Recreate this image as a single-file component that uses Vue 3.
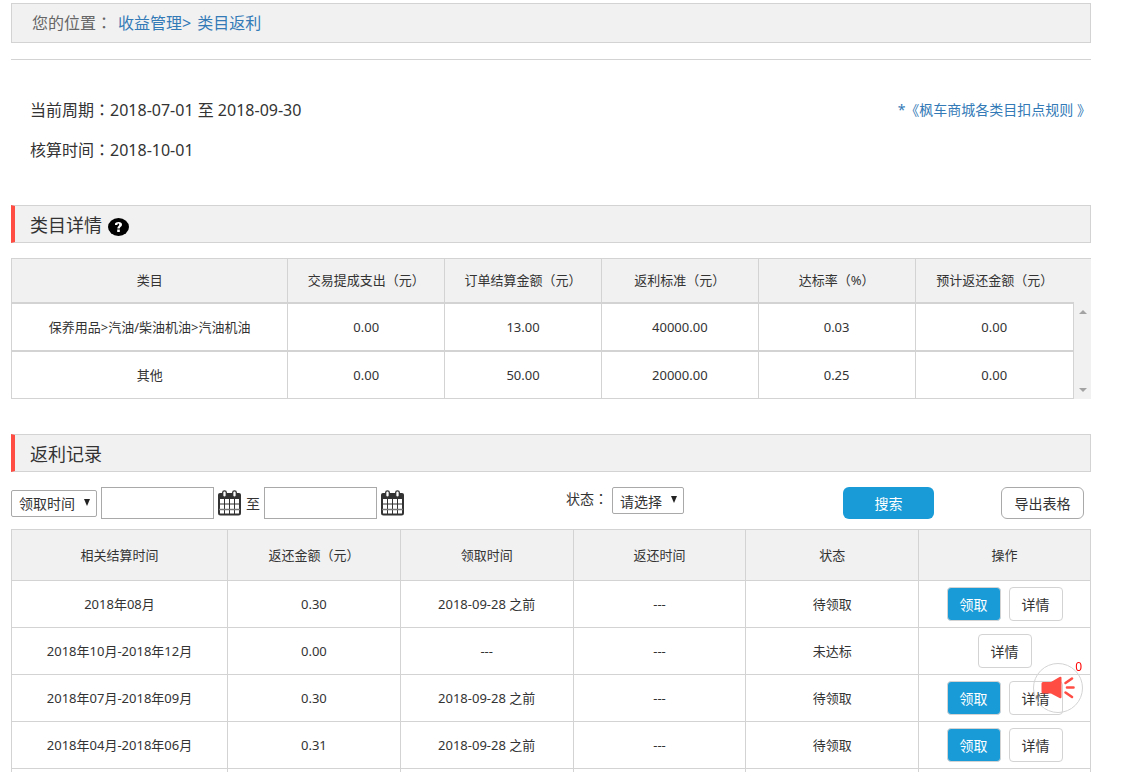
<script setup>
import { ref } from 'vue'

const timeType = ref('领取时间')
const status = ref('请选择')
const startDate = ref('')
const endDate = ref('')

const categories = [
  { name: '保养用品>汽油/柴油机油>汽油机油', paid: '0.00', settled: '13.00', target: '40000.00', rate: '0.03', expected: '0.00' },
  { name: '其他', paid: '0.00', settled: '50.00', target: '20000.00', rate: '0.25', expected: '0.00' }
]

const records = [
  { period: '2018年08月', amount: '0.30', claim: '2018-09-28 之前', returned: '---', status: '待领取', claimable: true },
  { period: '2018年10月-2018年12月', amount: '0.00', claim: '---', returned: '---', status: '未达标', claimable: false },
  { period: '2018年07月-2018年09月', amount: '0.30', claim: '2018-09-28 之前', returned: '---', status: '待领取', claimable: true },
  { period: '2018年04月-2018年06月', amount: '0.31', claim: '2018-09-28 之前', returned: '---', status: '待领取', claimable: true }
]
</script>

<template>
  <main class="page">
    <nav class="crumb" aria-label="您的位置">
      <span>您的位置<span class="colon">：</span></span>
      <a href="#income">收益管理&gt;</a>
      <a href="#category">类目返利</a>
    </nav>

    <section class="info">
      <div class="cycle">
        <p>当前周期<span class="colon">：</span>2018-07-01 至 2018-09-30</p>
        <p>核算时间<span class="colon">：</span>2018-10-01</p>
      </div>
      <a class="rules" href="#rules">*《枫车商城各类目扣点规则 》</a>
    </section>

    <header class="title">
      <h2>类目详情</h2>
      <button class="help" type="button" aria-label="帮助">
        <svg viewBox="0 0 21 18" width="21" height="18">
          <ellipse cx="10.500" cy="9" rx="10.500" ry="9" fill="#000" />
          <path d="M7 7V5.500Q7.500 4 10.500 4Q14 4 14 6.700Q14 8.200 12.500 9Q11.700 9.500 11.700 10.500H9.300Q9.200 9 10.500 8Q11.400 7.200 11.200 6.200Q10.800 5 9.600 5.700L9.400 7Z M9.200 11.600H11.800V14H9.200Z" fill="#fff" />
        </svg>
      </button>
    </header>

    <div class="detail">
      <table class="detail-table">
        <colgroup>
          <col class="d-name"><col v-for="n in 4" :key="n" class="d-value"><col>
        </colgroup>
        <thead>
          <tr>
            <th>类目</th>
            <th>交易提成支出（元）</th>
            <th>订单结算金额（元）</th>
            <th>返利标准（元）</th>
            <th>达标率（%）</th>
            <th>预计返还金额（元）</th>
          </tr>
        </thead>
        <tbody>
          <tr v-for="c in categories" :key="c.name">
            <td>{{ c.name }}</td>
            <td>{{ c.paid }}</td>
            <td>{{ c.settled }}</td>
            <td>{{ c.target }}</td>
            <td>{{ c.rate }}</td>
            <td>{{ c.expected }}</td>
          </tr>
        </tbody>
      </table>
      <div class="rail" aria-hidden="true">
        <svg viewBox="0 0 8 4" width="8" height="4"><path d="M0 4L4 0L8 4Z" fill="#a3a3a3" /></svg>
        <svg viewBox="0 0 8 4" width="8" height="4"><path d="M0 0L4 4L8 0Z" fill="#a3a3a3" /></svg>
      </div>
    </div>

    <header class="title">
      <h2>返利记录</h2>
    </header>

    <form class="filter" @submit.prevent>
      <div class="dates">
        <span class="picker wide">
          <select v-model="timeType" aria-label="时间类型"><option>领取时间</option></select>
          <svg viewBox="0 0 6 7" width="6" height="7"><path d="M0 0H6L3 7Z" fill="#222" /></svg>
        </span>
        <template v-for="n in 2" :key="n">
          <label v-if="n === 2" for="date-2" class="to">至</label>
          <input v-if="n === 1" id="date-1" v-model="startDate" type="text" aria-label="开始日期">
          <input v-else id="date-2" v-model="endDate" type="text">
          <svg class="calendar" viewBox="0 0 24 26" width="24" height="26">
            <rect x="1" y="5" width="21" height="19.500" rx="1.500" fill="#fff" stroke="#333" stroke-width="2" />
            <path d="M0 9V5Q0 3 2 3H21Q23 3 23 5V9Z" fill="#333" />
            <path d="M6.500 9V24M11.500 9V24M16.500 9V24M1 14H22" stroke="#333" stroke-width="1" />
            <path d="M1 19.500H22" stroke="#777" stroke-width="1.500" />
            <rect x="4.700" y="0.800" width="3.600" height="6.400" rx="1.800" fill="#fff" stroke="#333" stroke-width="1.300" />
            <rect x="14.700" y="0.800" width="3.600" height="6.400" rx="1.800" fill="#fff" stroke="#333" stroke-width="1.300" />
          </svg>
        </template>
      </div>
      <div class="state">
        <label for="status">状态<span class="colon">：</span></label>
        <span class="picker">
          <select id="status" v-model="status"><option>请选择</option></select>
          <svg viewBox="0 0 6 7" width="6" height="7"><path d="M0 0H6L3 7Z" fill="#222" /></svg>
        </span>
      </div>
      <div><button class="search" type="submit">搜索</button></div>
      <div><button class="export" type="button">导出表格</button></div>
    </form>

    <table class="records">
      <colgroup>
        <col class="r-period"><col><col><col><col><col>
      </colgroup>
      <thead>
        <tr>
          <th>相关结算时间</th>
          <th>返还金额（元）</th>
          <th>领取时间</th>
          <th>返还时间</th>
          <th>状态</th>
          <th>操作</th>
        </tr>
      </thead>
      <tbody>
        <tr v-for="r in records" :key="r.period">
          <td>{{ r.period }}</td>
          <td>{{ r.amount }}</td>
          <td>{{ r.claim }}</td>
          <td>{{ r.returned }}</td>
          <td>{{ r.status }}</td>
          <td>
            <div class="actions">
              <button v-if="r.claimable" class="act primary" type="button">领取</button>
              <button class="act" type="button">详情</button>
            </div>
          </td>
        </tr>
        <tr class="tail"><td v-for="n in 6" :key="n"></td></tr>
      </tbody>
    </table>

    <button class="notice" type="button" aria-label="公告">
      <svg viewBox="0 0 34 24" width="34" height="24">
        <path d="M2 6H10L18.500 1Q20.500 0 20.500 2V21Q20.500 23 18.500 22L10 17.500H2Q0.500 17.500 0.500 16V7.500Q0.500 6 2 6Z" fill="#ff4d44" />
        <path d="M24.500 7L31 2.500M26 11.500H32.500M24.500 16.500L31 21" stroke="#ff4d44" stroke-width="2.600" stroke-linecap="round" />
      </svg>
      <span class="count">0</span>
    </button>
  </main>
</template>

<style>
body {
  background: #fff;
}
</style>

<style scoped>
.page {
  margin: 0 37px 0 11px;
  padding-top: 3px;
  font-family: "Noto Sans", "Noto Sans CJK SC", sans-serif;
  font-size: 13px;
  color: #333;
}
.page *,
.page *::before {
  box-sizing: border-box;
}
button,
input,
select {
  margin: 0;
  font-family: inherit;
  color: #333;
}
a {
  color: #337ab7;
  text-decoration: none;
}
.colon {
  font-family: "Noto Sans CJK TC", sans-serif;
  line-height: 1;
}
.crumb {
  display: flex;
  align-items: center;
  gap: 6px;
  height: 40px;
  padding-left: 20px;
  border: 1px solid #d3d3d3;
  background: #f1f1f1;
  font-size: 16px;
  line-height: 20px;
  color: #666;
}
.info {
  display: flex;
  justify-content: space-between;
  margin: 16px 0 35px;
  padding: 30px 0 0 19px;
  border-top: 1px solid #d3d3d3;
  line-height: 40px;
}
.cycle {
  font-size: 16px;
}
.cycle p {
  height: 40px;
  margin: 0;
}
.rules {
  font-size: 14px;
}
.title {
  display: flex;
  align-items: center;
  gap: 6px;
  height: 38px;
  padding-left: 15px;
  border: 1px solid #d3d3d3;
  border-left: 4px solid #ff4d44;
  background: #f1f1f1;
}
.title h2 {
  margin: 0;
  font-size: 18px;
  font-weight: 400;
}
.help {
  display: flex;
  margin-top: 6px;
  padding: 0;
  border: 0;
  background: none;
}
table {
  width: 100%;
  table-layout: fixed;
  border-spacing: 0;
  line-height: 20px;
  text-align: center;
}
th {
  font-weight: 400;
  background: #f1f1f1;
  border-top: 1px solid #d3d3d3;
}
th,
td {
  padding: 0;
  border-bottom: 1px solid #d3d3d3;
  border-left: 1px solid #d3d3d3;
}
.detail {
  display: flex;
  margin: 15px 0 35px;
}
.detail-table {
  flex: 1;
}
.d-name {
  width: 26%;
}
.d-value {
  width: 14.75%;
}
.detail-table th {
  height: 46px;
  padding-bottom: 2px;
  border-bottom-width: 2px;
}
.detail-table td {
  height: 48px;
  border-bottom-width: 2px;
}
.detail-table tr:last-child td {
  height: 47px;
  border-bottom-width: 1px;
}
.detail-table tbody td:last-child {
  border-right: 1px solid #d3d3d3;
}
.rail {
  display: flex;
  flex-direction: column;
  justify-content: space-between;
  align-items: center;
  width: 17px;
  padding: 51px 0 7px;
  border-top: 1px solid #d3d3d3;
  background: #f1f1f1;
}
.filter {
  display: grid;
  grid-template-columns: 555fr 277fr 158fr 90fr;
  height: 32px;
  margin: 15px 0 10px;
}
.dates {
  display: flex;
  align-items: center;
  gap: 4px;
}
.to {
  font-size: 14px;
}
.state {
  display: flex;
  align-items: flex-start;
  gap: 4px;
  line-height: 24px;
  font-size: 14px;
}
.picker {
  position: relative;
  display: block;
  width: 72px;
  height: 27px;
}
.wide {
  width: 86px;
}
.picker select {
  width: 100%;
  height: 100%;
  padding: 1px 0 0 7px;
  border: 1px solid #a9a9a9;
  border-radius: 2px;
  background: #fff;
  font-size: 14px;
  appearance: none;
}
.picker svg {
  position: absolute;
  top: 9px;
  right: 7px;
  pointer-events: none;
}
.dates input {
  width: 113px;
  height: 32px;
  padding: 0 6px;
  border: 1px solid #a9a9a9;
  background: #fff;
}
.search,
.export {
  height: 32px;
  padding: 0;
  border-radius: 6px;
  font-size: 14px;
}
.search {
  width: 91px;
  border: 0;
  background: #189bd7;
  color: #fff;
}
.export {
  width: 83px;
  border: 1px solid #a9a9a9;
  background: #fff;
}
.r-period {
  width: 20%;
}
.records th:last-child,
.records td:last-child {
  border-right: 1px solid #d3d3d3;
}
.records th {
  height: 52px;
}
.records td {
  height: 47px;
}
.records .tail td {
  height: 3px;
  border-bottom: 0;
}
.actions {
  display: flex;
  justify-content: center;
  gap: 8px;
}
.act {
  width: 54px;
  height: 34px;
  padding: 0;
  border: 1px solid #d3d3d3;
  border-radius: 4px;
  background: #fff;
  font-size: 14px;
}
.primary {
  background: #189bd7;
  color: #fff;
}
.notice {
  position: fixed;
  right: 45px;
  bottom: 59px;
  display: flex;
  align-items: center;
  justify-content: center;
  width: 50px;
  height: 50px;
  padding: 0;
  border: 1px solid #d3d3d3;
  border-radius: 50%;
  background: none;
}
.count {
  position: absolute;
  top: -5px;
  right: 0;
  font-size: 12px;
  line-height: 16px;
  color: #f00;
}
</style>
